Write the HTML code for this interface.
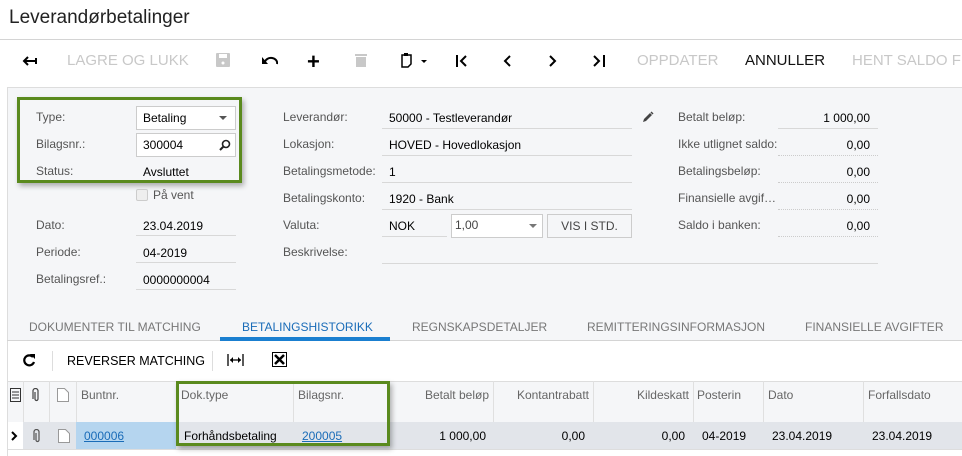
<!DOCTYPE html><html><head><meta charset="utf-8"><style>
*{margin:0;padding:0;box-sizing:border-box}
body{width:962px;height:456px;overflow:hidden;background:#fff;font-family:"Liberation Sans",Arial,sans-serif;font-size:12px;color:#000;position:relative}
.a{position:absolute;white-space:nowrap}
.lb{color:#555}
.tb{font-size:15px;color:#c8c8c8}
.ul{border-bottom:1px solid #d8d8d8}
.dot{border-bottom:1px dotted #ccc}
.box{background:#fff;border:1px solid #ccc}
.hd{color:#666;font-size:12px}
.vl{position:absolute;width:1px;background:#e0e0e0}
</style></head><body>
<div class="a" style="left:9px;top:7px;font-size:19px;color:#222">Leverandørbetalinger</div>
<div class="a" style="left:0;top:39px;width:962px;height:1px;background:#d4d4d4"></div>
<!-- toolbar -->
<svg class="a" style="left:22px;top:54px" width="16" height="14"><path d="M2 7h12M6 3L2 7l4 4M14 4v6" stroke="#000" stroke-width="2" fill="none"/></svg>
<div class="a tb" style="left:67px;top:52px">LAGRE OG LUKK</div>
<svg class="a" style="left:216px;top:53px" width="14" height="14"><rect x="0" y="0" width="14" height="14" rx="1" fill="#c8c8c8"/><rect x="3" y="1" width="8" height="4" fill="#fff"/><circle cx="7" cy="10" r="1.5" fill="#fff"/></svg>
<svg class="a" style="left:262px;top:54px" width="16" height="12"><path d="M3 8a6 5 0 0 1 12 2" stroke="#000" stroke-width="2" fill="none"/><path d="M0 3l0 7 6 0z" fill="#000"/></svg>
<div class="a" style="left:307px;top:49px;font-size:22px;font-weight:bold">+</div>
<svg class="a" style="left:355px;top:53px" width="12" height="14"><rect x="0" y="1" width="12" height="2" fill="#c8c8c8"/><rect x="1" y="4" width="10" height="10" fill="#c8c8c8"/></svg>
<svg class="a" style="left:400px;top:53px" width="30" height="16"><path d="M2 2h9v9l-3 3H2z" stroke="#000" stroke-width="1.5" fill="none"/><rect x="4" y="0" width="4" height="3" fill="#000"/><path d="M21 7h6l-3 3z" fill="#000"/></svg>
<svg class="a" style="left:455px;top:54px" width="14" height="14"><path d="M2 1v12M11 2L6 7l5 5" stroke="#000" stroke-width="2" fill="none"/></svg>
<svg class="a" style="left:501px;top:54px" width="12" height="14"><path d="M9 2L4 7l5 5" stroke="#000" stroke-width="2" fill="none"/></svg>
<svg class="a" style="left:547px;top:54px" width="12" height="14"><path d="M3 2l5 5-5 5" stroke="#000" stroke-width="2" fill="none"/></svg>
<svg class="a" style="left:592px;top:54px" width="14" height="14"><path d="M2 2l5 5-5 5M12 1v12" stroke="#000" stroke-width="2" fill="none"/></svg>
<div class="a tb" style="left:637px;top:52px">OPPDATER</div>
<div class="a tb" style="left:745px;top:52px;color:#111">ANNULLER</div>
<div class="a tb" style="left:852px;top:52px">HENT SALDO FR</div>
<!-- form -->
<div class="a" style="left:7px;top:87px;width:955px;height:254px;background:#f5f6f8;border-left:1px solid #ddd;border-top:1px solid #ddd"></div>
<div class="a" style="left:17px;top:97px;width:225px;height:86px;border:3px solid #5a8a1e;box-shadow:2px 3px 5px rgba(0,0,0,.3)"></div>
<div class="a lb" style="left:36px;top:110px">Type:</div>
<div class="a box" style="left:136px;top:106px;width:100px;height:24px"></div>
<div class="a" style="left:143px;top:111px">Betaling</div>
<svg class="a" style="left:219px;top:116px" width="8" height="5"><path d="M0 0h8L4 4z" fill="#555"/></svg>
<div class="a lb" style="left:36px;top:137px">Bilagsnr.:</div>
<div class="a box" style="left:136px;top:133px;width:100px;height:24px"></div>
<div class="a" style="left:143px;top:138px">300004</div>
<svg class="a" style="left:219px;top:139px" width="12" height="12"><circle cx="7" cy="5" r="3.5" stroke="#222" stroke-width="1.6" fill="none"/><path d="M4.5 7.5L1 11" stroke="#222" stroke-width="2"/></svg>
<div class="a lb" style="left:36px;top:164px">Status:</div>
<div class="a" style="left:143px;top:165px">Avsluttet</div>
<div class="a" style="left:136px;top:189px;width:12px;height:12px;border:1px solid #ccc;background:#eee;border-radius:2px"></div>
<div class="a lb" style="left:153px;top:188px">På vent</div>
<div class="a lb" style="left:36px;top:218px">Dato:</div>
<div class="a ul" style="left:136px;top:208px;width:100px;height:28px"></div>
<div class="a" style="left:143px;top:219px">23.04.2019</div>
<div class="a lb" style="left:36px;top:245px">Periode:</div>
<div class="a ul" style="left:136px;top:235px;width:100px;height:28px"></div>
<div class="a" style="left:143px;top:246px">04-2019</div>
<div class="a lb" style="left:36px;top:272px">Betalingsref.:</div>
<div class="a ul" style="left:136px;top:262px;width:100px;height:28px"></div>
<div class="a" style="left:143px;top:273px">0000000004</div>

<div class="a lb" style="left:283px;top:110px">Leverandør:</div>
<div class="a ul" style="left:382px;top:101px;width:250px;height:28px"></div>
<div class="a" style="left:389px;top:111px">50000 - Testleverandør</div>
<svg class="a" style="left:642px;top:111px" width="12" height="12"><path d="M1 11l1-3 6-6 2 2-6 6z" fill="#444"/><path d="M9 1l2 2" stroke="#444" stroke-width="1.5"/></svg>
<div class="a lb" style="left:283px;top:137px">Lokasjon:</div>
<div class="a ul" style="left:382px;top:128px;width:250px;height:28px"></div>
<div class="a" style="left:389px;top:138px">HOVED - Hovedlokasjon</div>
<div class="a lb" style="left:283px;top:164px">Betalingsmetode:</div>
<div class="a ul" style="left:382px;top:155px;width:250px;height:28px"></div>
<div class="a" style="left:389px;top:165px">1</div>
<div class="a lb" style="left:283px;top:191px">Betalingskonto:</div>
<div class="a ul" style="left:382px;top:182px;width:250px;height:28px"></div>
<div class="a" style="left:389px;top:192px">1920 - Bank</div>
<div class="a lb" style="left:283px;top:218px">Valuta:</div>
<div class="a ul" style="left:382px;top:209px;width:65px;height:28px"></div>
<div class="a" style="left:389px;top:219px">NOK</div>
<div class="a box" style="left:451px;top:214px;width:92px;height:24px"></div>
<div class="a" style="left:455px;top:218px;color:#444">1,00</div>
<svg class="a" style="left:529px;top:224px" width="8" height="5"><path d="M0 0h8L4 4z" fill="#777"/></svg>
<div class="a" style="left:547px;top:214px;width:85px;height:24px;border:1px solid #ccc;background:#f5f6f8;text-align:center;line-height:22px;color:#444">VIS I STD.</div>
<div class="a lb" style="left:283px;top:245px">Beskrivelse:</div>
<div class="a ul" style="left:382px;top:236px;width:496px;height:28px"></div>

<div class="a lb" style="left:678px;top:110px">Betalt beløp:</div>
<div class="a ul" style="left:778px;top:101px;width:100px;height:28px"></div>
<div class="a" style="left:778px;top:111px;width:92px;text-align:right">1 000,00</div>
<div class="a lb" style="left:678px;top:137px">Ikke utlignet saldo:</div>
<div class="a dot" style="left:778px;top:128px;width:100px;height:28px"></div>
<div class="a" style="left:778px;top:138px;width:92px;text-align:right">0,00</div>
<div class="a lb" style="left:678px;top:164px">Betalingsbeløp:</div>
<div class="a dot" style="left:778px;top:155px;width:100px;height:28px"></div>
<div class="a" style="left:778px;top:165px;width:92px;text-align:right">0,00</div>
<div class="a lb" style="left:678px;top:191px">Finansielle avgif…</div>
<div class="a dot" style="left:778px;top:182px;width:100px;height:28px"></div>
<div class="a" style="left:778px;top:192px;width:92px;text-align:right">0,00</div>
<div class="a lb" style="left:678px;top:218px">Saldo i banken:</div>
<div class="a dot" style="left:778px;top:209px;width:100px;height:28px"></div>
<div class="a" style="left:778px;top:219px;width:92px;text-align:right">0,00</div>

<!-- tabs -->
<div class="a" style="left:7px;top:340px;width:955px;height:1px;background:#d4d4d4"></div>
<div class="a" style="left:220px;top:337px;width:170px;height:4px;background:#1a7fd0"></div>
<div class="a" style="left:29px;top:320px;color:#777">DOKUMENTER TIL MATCHING</div>
<div class="a" style="left:242px;top:320px;color:#1a6cb8">BETALINGSHISTORIKK</div>
<div class="a" style="left:412px;top:320px;color:#777">REGNSKAPSDETALJER</div>
<div class="a" style="left:587px;top:320px;color:#777">REMITTERINGSINFORMASJON</div>
<div class="a" style="left:805px;top:320px;color:#777">FINANSIELLE AVGIFTER</div>
<div class="a" style="left:7px;top:341px;width:1px;height:115px;background:#ddd"></div>
<!-- grid toolbar -->
<svg class="a" style="left:22px;top:353px" width="14" height="14"><path d="M11 4A5 5 0 1 0 12 9" stroke="#000" stroke-width="2.2" fill="none"/><path d="M8 1h5v5z" fill="#000"/></svg>
<div class="a" style="left:52px;top:351px;width:1px;height:20px;background:#ddd"></div>
<div class="a" style="left:67px;top:354px;font-size:12.5px">REVERSER MATCHING</div>
<div class="a" style="left:212px;top:351px;width:1px;height:20px;background:#ddd"></div>
<svg class="a" style="left:227px;top:353px" width="17" height="14"><path d="M1 1v12M16 1v12M3 7h11" stroke="#000" stroke-width="1.3"/><path d="M3 7l3-3v6zM14 7l-3-3v6z" fill="#000"/></svg>
<svg class="a" style="left:272px;top:352px" width="15" height="15"><rect x="0.5" y="0.5" width="14" height="14" fill="#fff" stroke="#000"/><path d="M3 3l9 9M12 3l-9 9" stroke="#000" stroke-width="2.5"/></svg>
<!-- grid -->
<div class="a" style="left:8px;top:381px;width:954px;height:41px;background:#f5f6f8;border-top:1px solid #ddd"></div>
<div class="a" style="left:23px;top:422px;width:939px;height:27px;background:#e2e5ea"></div>
<div class="a" style="left:76px;top:422px;width:100px;height:27px;background:#b5d5ef"></div>
<div class="a" style="left:8px;top:449px;width:954px;height:1px;background:#ddd"></div>
<div class="vl" style="left:23px;top:381px;height:41px"></div>
<div class="vl" style="left:49px;top:381px;height:41px"></div>
<div class="vl" style="left:76px;top:381px;height:41px"></div>
<div class="vl" style="left:293px;top:381px;height:41px"></div>
<div class="vl" style="left:493px;top:381px;height:41px"></div>
<div class="vl" style="left:593px;top:381px;height:41px"></div>
<div class="vl" style="left:693px;top:381px;height:41px"></div>
<div class="vl" style="left:763px;top:381px;height:41px"></div>
<div class="vl" style="left:863px;top:381px;height:41px"></div>
<svg class="a" style="left:10px;top:388px" width="11" height="14"><rect x="0.5" y="0.5" width="10" height="13" fill="none" stroke="#333"/><path d="M2 4h7M2 7h7M2 10h7" stroke="#333"/></svg>
<svg class="a" style="left:32px;top:388px" width="9" height="14"><path d="M3 4v7a1.5 1.5 0 0 0 3 0V3a2.5 2.5 0 0 0-5 0v8" stroke="#444" stroke-width="1.2" fill="none"/></svg>
<svg class="a" style="left:57px;top:388px" width="12" height="14"><path d="M.5.5h7l4 4v9H.5z" fill="#fff" stroke="#999"/></svg>
<div class="a hd" style="left:81px;top:388px">Buntnr.</div>
<div class="a hd" style="left:181px;top:388px">Dok.type</div>
<div class="a hd" style="left:298px;top:388px">Bilagsnr.</div>
<div class="a hd" style="left:390px;top:388px;width:99px;text-align:right">Betalt beløp</div>
<div class="a hd" style="left:493px;top:388px;width:96px;text-align:right">Kontantrabatt</div>
<div class="a hd" style="left:593px;top:388px;width:96px;text-align:right">Kildeskatt</div>
<div class="a hd" style="left:697px;top:388px">Posterin</div>
<div class="a hd" style="left:768px;top:388px">Dato</div>
<div class="a hd" style="left:868px;top:388px">Forfallsdato</div>
<svg class="a" style="left:11px;top:431px" width="7" height="10"><path d="M1 1l4 4-4 4" stroke="#000" stroke-width="2" fill="none"/></svg>
<svg class="a" style="left:33px;top:429px" width="9" height="14"><path d="M3 4v7a1.5 1.5 0 0 0 3 0V3a2.5 2.5 0 0 0-5 0v8" stroke="#555" stroke-width="1.2" fill="none"/></svg>
<svg class="a" style="left:58px;top:429px" width="12" height="14"><path d="M.5.5h7l4 4v9H.5z" fill="#fff" stroke="#999"/></svg>
<div class="a" style="left:84px;top:429px;color:#1a6cb8;text-decoration:underline">000006</div>
<div class="a" style="left:184px;top:429px">Forhåndsbetaling</div>
<div class="a" style="left:302px;top:429px;color:#1a6cb8;text-decoration:underline">200005</div>
<div class="a" style="left:390px;top:429px;width:96px;text-align:right">1 000,00</div>
<div class="a" style="left:493px;top:429px;width:92px;text-align:right">0,00</div>
<div class="a" style="left:593px;top:429px;width:92px;text-align:right">0,00</div>
<div class="a" style="left:702px;top:429px">04-2019</div>
<div class="a" style="left:772px;top:429px">23.04.2019</div>
<div class="a" style="left:872px;top:429px">23.04.2019</div>
<div class="a" style="left:176px;top:381px;width:214px;height:65px;border:3px solid #5a8a1e;box-shadow:2px 3px 5px rgba(0,0,0,.3)"></div>
</body></html>
